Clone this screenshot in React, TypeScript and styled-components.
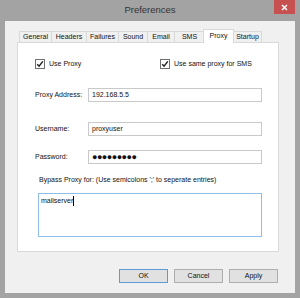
import styled, { createGlobalStyle } from "styled-components";

const GlobalStyle = createGlobalStyle`
  html, body {
    margin: 0;
    padding: 0;
    background: #a3a3a3;
  }
  * { box-sizing: border-box; }
`;

const Window = styled.div`
  width: 300px;
  height: 298px;
  display: flex;
  flex-direction: column;
  background: #a3a3a3;
  font-family: "Liberation Sans", Arial, sans-serif;
  font-size: 7px;
  color: #111;
`;

const TitleBar = styled.div`
  height: 21px;
  display: flex;
  align-items: flex-start;
  position: relative;
`;

const Title = styled.div`
  flex: 1;
  text-align: center;
  font-size: 9.5px;
  line-height: 20px;
  color: #333;
`;

const CloseButton = styled.div`
  position: absolute;
  top: 0;
  right: 5px;
  width: 21px;
  height: 14px;
  background: #c75050;
  display: flex;
  align-items: center;
  justify-content: center;
`;

const Client = styled.div`
  flex: 1;
  margin: 0 5px 5px 5px;
  background: #f0f0f0;
  padding: 8px 16px 0 12px;
  display: flex;
  flex-direction: column;
`;

const TabRow = styled.div`
  display: flex;
  align-items: flex-end;
  height: 14px;
  padding-left: 2px;
  position: relative;
  z-index: 1;
`;

const Tab = styled.div<{ $active?: boolean; $width: number }>`
  width: ${(p) => p.$width}px;
  height: ${(p) => (p.$active ? "14px" : "12px")};
  margin-right: -1px;
  margin-left: ${(p) => (p.$active ? "-1px" : "0")};
  border: 1px solid #d9d9d9;
  border-bottom: ${(p) => (p.$active ? "none" : "1px solid #d9d9d9")};
  background: ${(p) => (p.$active ? "#fff" : "#f0f0f0")};
  line-height: ${(p) => (p.$active ? "11px" : "10px")};
  text-align: center;
  position: relative;
  z-index: ${(p) => (p.$active ? 2 : 1)};
  white-space: nowrap;
`;

const Panel = styled.div`
  height: 210px;
  margin-top: -1px;
  border: 1px solid #d9d9d9;
  background: #fff;
  padding: 16px 16px 0 17px;
  display: flex;
  flex-direction: column;
`;

const CheckRow = styled.div`
  display: flex;
  height: 10px;
  align-items: center;
`;

const CheckLabel = styled.label<{ $width?: number }>`
  display: flex;
  align-items: center;
  gap: 4px;
  width: ${(p) => (p.$width ? `${p.$width}px` : "auto")};
  line-height: 10px;
`;

const Box = styled.span`
  width: 10px;
  height: 10px;
  border: 1px solid #707070;
  background: #fff;
  display: flex;
  align-items: center;
  justify-content: center;
`;

const FieldRow = styled.div<{ $top: number }>`
  display: grid;
  grid-template-columns: 53px 174px;
  align-items: center;
  margin-top: ${(p) => p.$top}px;
`;

const Label = styled.span`
  line-height: 14px;
`;

const Input = styled.div<{ $dots?: boolean }>`
  height: 14px;
  border: 1px solid #c9c9c9;
  padding: 0 3px;
  line-height: 12px;
  font-size: ${(p) => (p.$dots ? "9px" : "7px")};
  letter-spacing: ${(p) => (p.$dots ? "-0.5px" : "0")};
  font-weight: ${(p) => (p.$dots ? 700 : 400)};
`;

const BypassLabel = styled.div`
  margin-top: 11px;
  margin-left: 4px;
  line-height: 10px;
`;

const TextArea = styled.div`
  margin-top: 8px;
  margin-left: 3px;
  width: 224px;
  height: 44px;
  border: 1px solid #8fbfe8;
  padding: 2px 2px;
  line-height: 10px;
  display: flex;
  align-items: flex-start;
`;

const Caret = styled.span`
  display: inline-block;
  width: 1px;
  height: 10px;
  background: #000;
`;

const ButtonRow = styled.div`
  display: flex;
  justify-content: flex-end;
  gap: 6px;
  margin-top: 17px;
  padding-right: 1px;
`;

const Button = styled.div<{ $default?: boolean }>`
  width: 49px;
  height: 14px;
  border: 1px solid ${(p) => (p.$default ? "#5b9bd5" : "#adadad")};
  background: #e1e1e1;
  text-align: center;
  line-height: 12px;
`;

function Check() {
  return (
    <Box>
      <svg width="8" height="8" viewBox="0 0 8 8">
        <path d="M1.2 4.2 L3.1 6.2 L6.8 1.4" fill="none" stroke="#222" strokeWidth="1.5" />
      </svg>
    </Box>
  );
}

const tabs = [
  { label: "General", width: 33 },
  { label: "Headers", width: 36 },
  { label: "Failures", width: 33 },
  { label: "Sound", width: 30 },
  { label: "Email", width: 28 },
  { label: "SMS", width: 31 },
  { label: "Proxy", width: 31 },
  { label: "Startup", width: 29 },
];

export default function App() {
  return (
    <>
      <GlobalStyle />
      <Window>
        <TitleBar>
          <Title>Preferences</Title>
          <CloseButton>
            <svg width="7" height="7" viewBox="0 0 7 7">
              <path d="M1 1 L6 6 M6 1 L1 6" stroke="#fff" strokeWidth="1.5" />
            </svg>
          </CloseButton>
        </TitleBar>
        <Client>
          <TabRow>
            {tabs.map((t) => (
              <Tab key={t.label} $width={t.width} $active={t.label === "Proxy"}>
                {t.label}
              </Tab>
            ))}
          </TabRow>
          <Panel>
            <CheckRow>
              <CheckLabel $width={125}>
                <Check />
                Use Proxy
              </CheckLabel>
              <CheckLabel>
                <Check />
                Use same proxy for SMS
              </CheckLabel>
            </CheckRow>
            <FieldRow $top={19}>
              <Label>Proxy Address:</Label>
              <Input>192.168.5.5</Input>
            </FieldRow>
            <FieldRow $top={20}>
              <Label>Username:</Label>
              <Input>proxyuser</Input>
            </FieldRow>
            <FieldRow $top={14}>
              <Label>Password:</Label>
              <Input $dots>●●●●●●●●●</Input>
            </FieldRow>
            <BypassLabel>Bypass Proxy for: (Use semicolons ';' to seperate entries)</BypassLabel>
            <TextArea>
              mailserver
              <Caret />
            </TextArea>
          </Panel>
          <ButtonRow>
            <Button $default>OK</Button>
            <Button>Cancel</Button>
            <Button>Apply</Button>
          </ButtonRow>
        </Client>
      </Window>
    </>
  );
}
